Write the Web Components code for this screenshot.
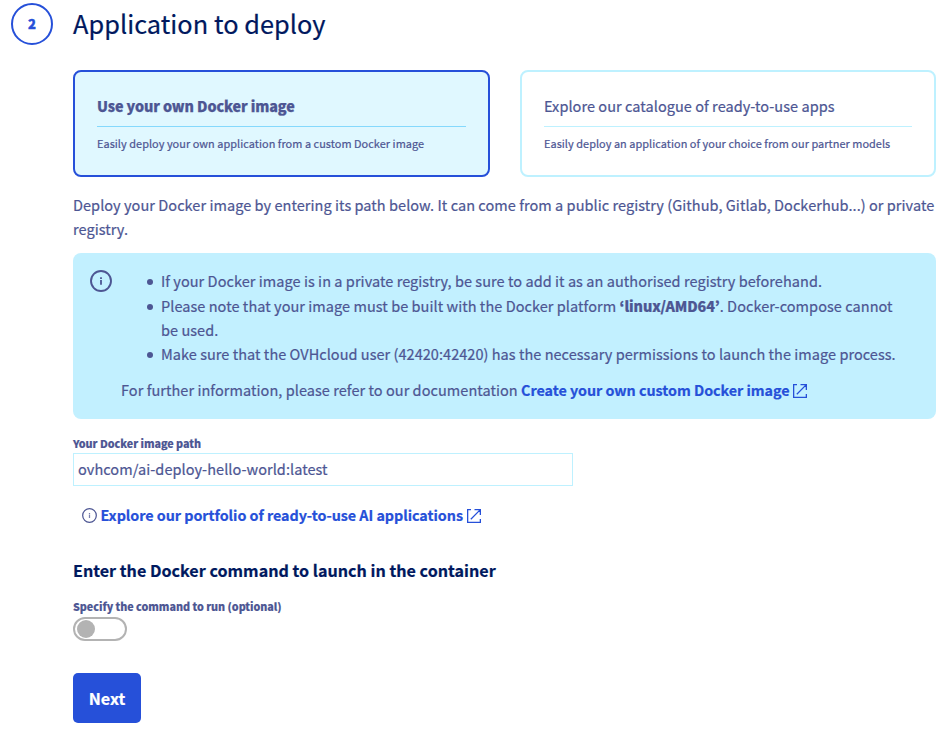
<!DOCTYPE html>
<html lang="en">
<head>
<meta charset="utf-8">
<title>Application to deploy</title>
<style>
html,body{margin:0;background:#fff}
body{width:951px;height:733px;overflow:hidden;font-family:"Noto Sans CJK KR","Noto Sans",sans-serif;font-size:14.5px;line-height:24px;letter-spacing:.055px;-webkit-text-stroke:.22px currentColor;color:#4d5693}
</style>
</head>
<body>
<deploy-step></deploy-step>
<script>
const define=(name,html)=>{
  const t=document.createElement('template');t.innerHTML=html;
  customElements.define(name,class extends HTMLElement{
    constructor(){super();this.attachShadow({mode:'open'}).append(t.content.cloneNode(true));}
  });
};
define('info-icon',`<style>:host{display:block;flex:none;width:var(--s,22px);height:var(--s,22px)}svg{display:block;width:100%;height:100%}circle{stroke-width:var(--w,1.9)}path{opacity:var(--o,1)}</style>
<svg viewBox="0 0 22 22" fill="none" stroke="currentColor"><circle cx="11" cy="11" r="10"/><path d="M11 7.3v1.7M11 10v4.7" stroke-width="1.8"/></svg>`);
define('external-icon',`<style>:host{display:inline-block;width:14px;height:14px;margin-left:3.9px;vertical-align:-2px}svg{display:block}</style>
<svg width="14" height="14" viewBox="0 0 14 14" fill="none" stroke="currentColor" stroke-width="1.3"><path d="M4 .65H.65v12.7h12.7V10M7.5.65h5.85V6M13.1.9 3.8 10.2"/></svg>`);
define('text-link',`<style>:host{display:inline;color:#2650d9;font-weight:700;font-size:14.33px;letter-spacing:-.037px}</style><slot></slot><external-icon></external-icon>`);
define('step-number',`<style>:host{display:flex;box-sizing:border-box;width:42px;height:42px;border:2px solid #2650d9;border-radius:50%;align-items:center;justify-content:center;color:#2650d9;font-size:13px;font-weight:900;-webkit-text-stroke:.4px currentColor}div{margin-top:-1px}</style><div><slot></slot></div>`);
define('choice-card',`<style>
:host{display:block;box-sizing:border-box;height:107px;border:2px solid #bef1ff;border-radius:8px;padding:21px 22px 0;--line:#bef1ff}
:host([selected]){border-color:#2650d9;background:#e0f8ff;--line:#85d9fd}
.t{height:33px;line-height:26px;border-bottom:1px solid var(--line);white-space:nowrap}
:host([selected]) .t{font-size:14.33px;font-weight:900;letter-spacing:-.1px;-webkit-text-stroke:.25px currentColor}
.d{font-size:10.9px;line-height:18px;margin-top:7px;white-space:nowrap}
</style><div class="t"><slot name="title"></slot></div><div class="d"><slot></slot></div>`);
define('info-message',`<style>
:host{display:flex;box-sizing:border-box;height:166px;background:#c2f0ff;border-radius:8px;padding:16px 16px 0 17px;gap:9px}
info-icon{margin-top:1px}
.c{flex:1;min-width:0}
</style><info-icon></info-icon><div class="c"><slot></slot></div>`);
define('bullet-item',`<style>:host{display:flex;padding-left:26px;gap:8px}i{flex:none;width:6px;height:6px;border-radius:50%;background:#4d5693;margin-top:10px}div{white-space:nowrap}</style><i></i><div><slot></slot></div>`);
define('field-label',`<style>:host{display:block;font-size:10.75px;line-height:18px;font-weight:900;letter-spacing:-.035px;-webkit-text-stroke:.15px currentColor}</style><slot></slot>`);
define('text-field',`<style>:host{display:block}.f{box-sizing:border-box;width:500px;height:33px;border:1px solid #bef1ff;padding:0 4px;line-height:30px}</style><field-label><slot name="label"></slot></field-label><div class="f"><slot></slot></div>`);
define('toggle-switch',`<style>:host{display:block}.s{box-sizing:border-box;width:54px;height:24px;border:2px solid #b3b3b3;border-radius:12px;padding:1px 2px;margin-top:1px}.k{width:18px;height:18px;border-radius:50%;background:#b3b3b3}</style><field-label><slot></slot></field-label><div class="s"><div class="k"></div></div>`);
define('primary-button',`<style>:host{display:flex;width:68px;height:50px;border-radius:5px;background:#2650d9;color:#fff;align-items:center;justify-content:center;font-size:16.1px;font-weight:700;letter-spacing:0}</style><slot></slot>`);
define('deploy-step',`<style>
:host{display:grid;grid-template-columns:42px 863px;column-gap:20px;padding:3px 0 0 11px}
main{display:flex;flex-direction:column}
h2{margin:0;font-size:25.3px;line-height:40px;height:67px;font-weight:400;color:#00185e;white-space:nowrap}
.cards{display:grid;grid-template-columns:417px 416px;gap:30px}
p{margin:16px 0 12px;white-space:nowrap}
b{font-weight:900;font-size:14.33px;letter-spacing:-.1px}
.more{margin-top:12px;white-space:nowrap}
text-field{margin-top:16px}
.hint{display:flex;align-items:center;gap:4px;margin:17px 0 0 8.5px;white-space:nowrap}
.hint info-icon{--s:15px;--w:1.8;--o:.75}
h3{margin:29px 0 0;font-size:16.1px;line-height:28px;font-weight:700;letter-spacing:.02px;color:#00185e}
toggle-switch{margin-top:14px}
primary-button{margin-top:32px}
</style>
<step-number>2</step-number>
<main>
<h2>Application to deploy</h2>
<div class="cards">
<choice-card selected><span slot="title">Use your own Docker image</span>Easily deploy your own application from a custom Docker image</choice-card>
<choice-card><span slot="title">Explore our catalogue of ready-to-use apps</span>Easily deploy an application of your choice from our partner models</choice-card>
</div>
<p>Deploy your Docker image by entering its path below. It can come from a public registry (Github, Gitlab, Dockerhub...) or private<br>registry.</p>
<info-message>
<bullet-item>If your Docker image is in a private registry, be sure to add it as an authorised registry beforehand.</bullet-item>
<bullet-item style="margin-top:1px">Please note that your image must be built with the Docker platform <b>‘linux/AMD64’</b>. Docker-compose cannot<br>be used.</bullet-item>
<bullet-item style="letter-spacing:.045px">Make sure that the OVHcloud user (42420:42420) has the necessary permissions to launch the image process.</bullet-item>
<div class="more">For further information, please refer to our documentation <text-link>Create your own custom Docker image</text-link></div>
</info-message>
<text-field><span slot="label">Your Docker image path</span>ovhcom/ai-deploy-hello-world:latest</text-field>
<div class="hint"><info-icon></info-icon><text-link>Explore our portfolio of ready-to-use AI applications</text-link></div>
<h3>Enter the Docker command to launch in the container</h3>
<toggle-switch>Specify the command to run (optional)</toggle-switch>
<primary-button>Next</primary-button>
</main>`);
</script>
</body>
</html>
